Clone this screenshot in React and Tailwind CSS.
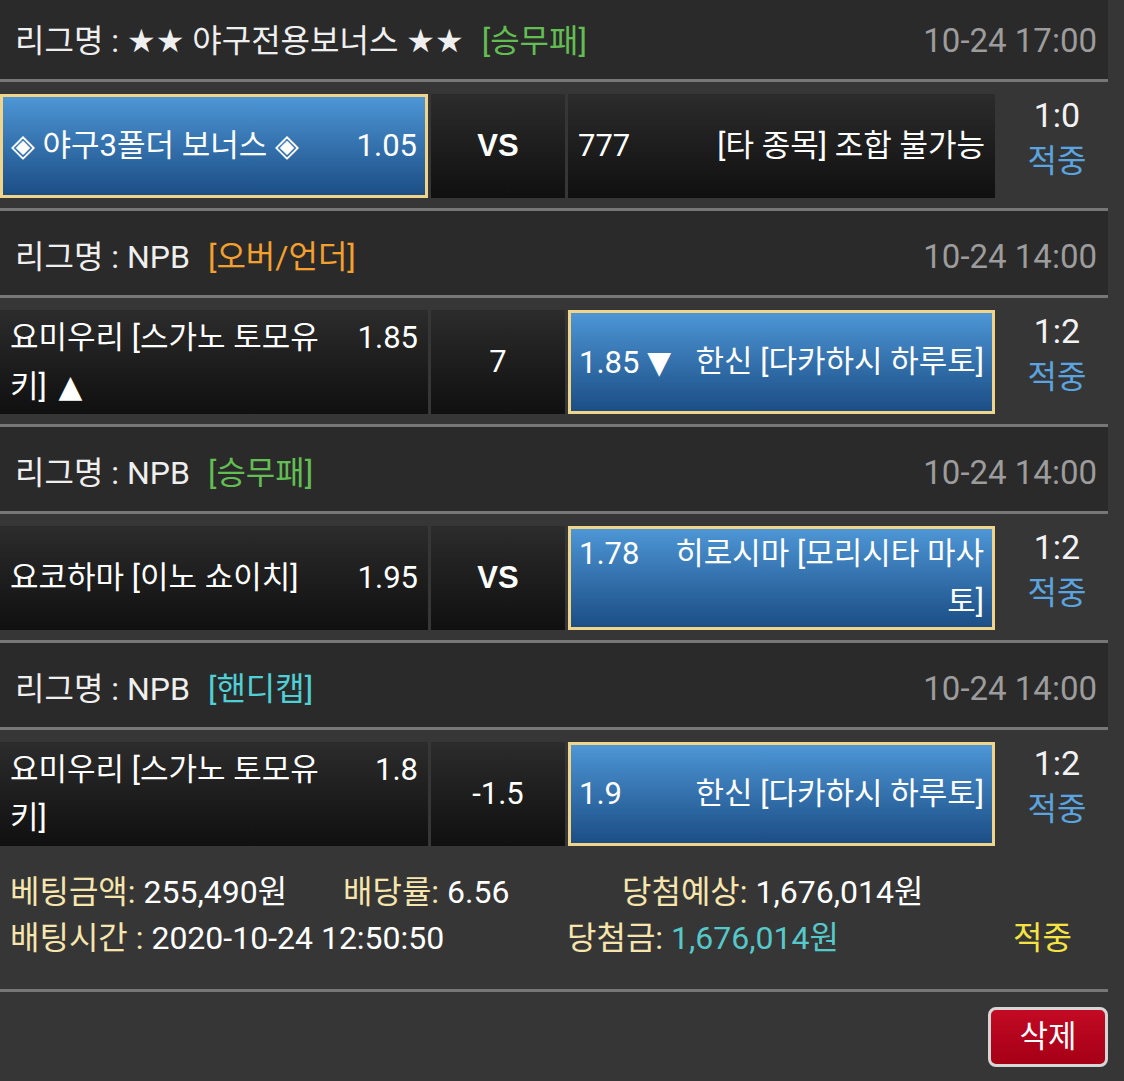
const FONT = { fontFamily: '"Roboto", "Noto Sans CJK KR", "DejaVu Sans", sans-serif' };
const SYM = { fontFamily: '"DejaVu Sans", sans-serif' };

const games = [
  {
    league: <>{"\u00a0"}<span style={SYM}>★★</span> 야구전용보너스 <span style={SYM}>★★</span></>,
    type: "[승무패]",
    typeColor: "text-[#62bd52]",
    time: "10-24 17:00",
    home: { name: "◈ 야구3폴더 보너스 ◈", odds: "1.05", picked: true },
    mid: "VS",
    away: { name: "[타 종목] 조합 불가능", odds: "777", picked: false },
    score: "1:0",
  },
  {
    league: " NPB",
    type: "[오버/언더]",
    typeColor: "text-[#f3a02e]",
    time: "10-24 14:00",
    home: { name: <>요미우리 [스가노 토모유키] <span className="ml-[4px]" style={SYM}>▲</span></>, odds: "1.85", picked: false },
    mid: "7",
    away: { name: "한신 [다카하시 하루토]", odds: <>1.85 <span style={SYM}>▼</span></>, picked: true },
    score: "1:2",
  },
  {
    league: " NPB",
    type: "[승무패]",
    typeColor: "text-[#62bd52]",
    time: "10-24 14:00",
    home: { name: "요코하마 [이노 쇼이치]", odds: "1.95", picked: false },
    mid: "VS",
    away: { name: "히로시마 [모리시타 마사토]", odds: "1.78", picked: true },
    score: "1:2",
  },
  {
    league: " NPB",
    type: "[핸디캡]",
    typeColor: "text-[#4fcfd6]",
    time: "10-24 14:00",
    home: { name: "요미우리 [스가노 토모유키]", odds: "1.8", picked: false },
    mid: "-1.5",
    away: { name: "한신 [다카하시 하루토]", odds: "1.9", picked: true },
    score: "1:2",
  },
];

function cellClass(picked) {
  return picked
    ? "border-[3px] border-[#f0d48a] bg-gradient-to-b from-[#4d96d6] to-[#1c4e85] px-[8px]"
    : "bg-gradient-to-b from-[#2c2c2c] to-[#101010] px-[10px]";
}

function Separator() {
  return <div className="h-[3px] w-[1108px] bg-[#777777]" />;
}

function GameBlock({ game }) {
  return (
    <div>
      <Separator />
      <div className="flex h-[84px] w-[1108px] items-center justify-between bg-[#2a2a2a] pl-[15px] pr-[11px] pt-[7px] text-[32px]">
        <div className="whitespace-pre text-[#efefef]">
          리그명 :{game.league}
          <span className={`ml-[18px] ${game.typeColor}`}>{game.type}</span>
        </div>
        <div className="text-[33px] text-[#9c9c9c]">{game.time}</div>
      </div>
      <Separator />
      <div className="flex gap-[3px] pb-[10px] pt-[12px] text-[31px] leading-[48px] text-white">
        <div className={`flex h-[104px] w-[428px] items-center ${cellClass(game.home.picked)}`}>
          <div className="flex w-full items-start gap-[8px]">
            <span className="flex-1">{game.home.name}</span>
            <span className="min-w-[64px] text-right">{game.home.odds}</span>
          </div>
        </div>
        <div className="flex h-[104px] w-[134px] items-center justify-center bg-gradient-to-b from-[#2c2c2c] to-[#101010]">
          {game.mid === "VS" ? (
            <span className="font-bold" style={{ fontFamily: '"Liberation Sans", Arial, sans-serif' }}>VS</span>
          ) : (
            <span>{game.mid}</span>
          )}
        </div>
        <div className={`flex h-[104px] w-[427px] items-center ${cellClass(game.away.picked)}`}>
          <div className="flex w-full items-start gap-[6px]">
            <span className="min-w-[64px] whitespace-nowrap">{game.away.odds}</span>
            <span className="flex-1 text-right">{game.away.name}</span>
          </div>
        </div>
        <div className="flex h-[104px] w-[118px] -translate-y-[2px] flex-col items-center text-[34px] leading-[46px]">
          <span className="text-[#f2f2f2]">{game.score}</span>
          <span className="text-[32px] text-[#5aa4e0]">적중</span>
        </div>
      </div>
    </div>
  );
}

export default function App() {
  return (
    <div className="min-h-[1081px] w-[1124px] overflow-hidden bg-[#363636]" style={FONT}>
      <div className="-mt-[8px]">
        {games.map((g, i) => (
          <GameBlock key={i} game={g} />
        ))}
      </div>
      <div className="pb-[28px] pl-[10px] pt-[13px] text-[32px] leading-[46px] text-white">
        <div className="flex">
          <span className="w-[333px]">
            <span className="text-[#f6e6ad]">베팅금액:</span> 255,490원
          </span>
          <span className="w-[279px]">
            <span className="text-[#f6e6ad]">배당률:</span> 6.56
          </span>
          <span>
            <span className="text-[#f6e6ad]">당첨예상:</span> 1,676,014원
          </span>
        </div>
        <div className="flex">
          <span className="w-[557px]">
            <span className="text-[#f6e6ad]">배팅시간 :</span> 2020-10-24 12:50:50
          </span>
          <span className="w-[446px]">
            <span className="text-[#f6e6ad]">당첨금:</span>{" "}
            <span className="text-[#55c9c9]">1,676,014원</span>
          </span>
          <span className="text-[#f4e443]">적중</span>
        </div>
      </div>
      <Separator />
      <div className="flex w-[1108px] justify-end pt-[15px]">
        <button className="flex h-[60px] w-[120px] items-center justify-center rounded-[8px] border-[3px] border-[#d6d6d6] bg-gradient-to-b from-[#c30a24] to-[#a50016] text-[31px] text-white">
          삭제
        </button>
      </div>
    </div>
  );
}
